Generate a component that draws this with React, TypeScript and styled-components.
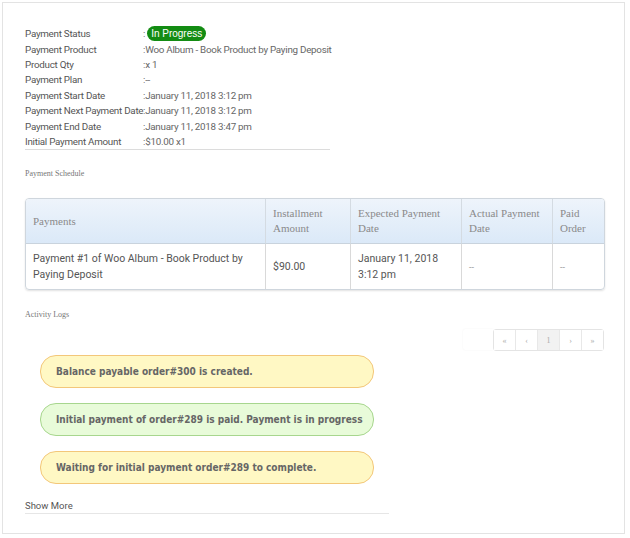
import styled, { createGlobalStyle } from "styled-components";

const GlobalStyle = createGlobalStyle`
    html, body {
        margin: 0;
        padding: 0;
        background: #fff;
    }
    body {
        font-family: Roboto, "Liberation Sans", sans-serif;
    }
`;

const Panel = styled.div`
    margin: 2px 3px 0 2px;
    width: 623px;
    height: 532px;
    box-sizing: border-box;
    border: 1px solid #e3e3e3;
    padding: 23px 20px 0 22px;
`;

const InfoList = styled.div`
    width: 305px;
    border-bottom: 1px solid #dcdcdc;
`;

const InfoRow = styled.div`
    display: flex;
    align-items: center;
    height: 15.4px;
    font-size: 9.8px;
    letter-spacing: -0.25px;
    color: #555;
    white-space: nowrap;
`;

const Label = styled.span`
    width: 118px;
    flex: none;
`;

const Value = styled.span`
    color: #666;
`;

const Badge = styled.span`
    display: inline-block;
    background: #138c13;
    color: #fff;
    font-family: "Liberation Sans", sans-serif;
    font-size: 10px;
    letter-spacing: 0;
    line-height: 15px;
    padding: 0 4px;
    border-radius: 8px;
    margin-left: 2px;
`;

const SectionTitle = styled.div<{ $top: number }>`
    font-family: "Liberation Serif", serif;
    font-size: 8px;
    color: #777;
    margin: ${(p) => p.$top}px 0 0;
`;

const Table = styled.table`
    margin-top: 20px;
    width: 580px;
    table-layout: fixed;
    border-collapse: separate;
    border-spacing: 0;
    border: 1px solid #cfd6dd;
    border-radius: 4px;
    box-shadow: 0 1px 2px rgba(0, 0, 0, 0.12);
    overflow: hidden;
`;

const Th = styled.th<{ $w?: number }>`
    width: ${(p) => (p.$w ? `${p.$w}px` : "auto")};
    box-sizing: border-box;
    text-align: left;
    vertical-align: middle;
    font-family: "Liberation Serif", serif;
    font-weight: 400;
    font-size: 11px;
    line-height: 15px;
    color: #8a8a8a;
    background: linear-gradient(#eef4fb, #dbe9f8);
    border-left: 1px solid #d4dbe2;
    border-bottom: 1px solid #c9d3dd;
    padding: 0 7px;
    height: 45px;
    &:first-child {
        border-left: none;
    }
`;

const Td = styled.td`
    font-size: 10.5px;
    line-height: 16px;
    color: #555;
    border-left: 1px solid #d9d9d9;
    padding: 0 7px;
    height: 45px;
    &:first-child {
        border-left: none;
    }
`;

const Dash = styled(Td)`
    color: #999;
    font-size: 9px;
`;

const PagerRow = styled.div`
    display: flex;
    justify-content: flex-end;
    margin-top: 10px;
`;

const Ghost = styled.div`
    width: 30px;
    height: 21px;
    border-radius: 3px 0 0 3px;
    box-shadow: 0 0 2px rgba(0, 0, 0, 0.06);
`;

const Pager = styled.div`
    display: flex;
    border: 1px solid #e4e4e4;
    border-radius: 3px;
`;

const PageBtn = styled.span<{ $active?: boolean }>`
    width: 21px;
    height: 20px;
    display: flex;
    align-items: center;
    justify-content: center;
    font-family: "Liberation Serif", serif;
    font-size: 8px;
    color: #aaa;
    background: ${(p) => (p.$active ? "#f2f2f2" : "#fff")};
    border-left: 1px solid #e8e8e8;
    &:first-child {
        border-left: none;
    }
`;

const Logs = styled.div`
    display: flex;
    flex-direction: column;
    gap: 15px;
    margin: 4px 0 0 15px;
`;

const Pill = styled.div<{ $tone: "yellow" | "green" }>`
    width: 334px;
    height: 33px;
    box-sizing: border-box;
    display: flex;
    align-items: center;
    padding-left: 15px;
    border-radius: 16px;
    border: 1px solid ${(p) => (p.$tone === "green" ? "#a7d68e" : "#f3c77a")};
    background: ${(p) => (p.$tone === "green" ? "#e8fbd9" : "#fff8c4")};
    font-family: "DejaVu Sans Condensed", "DejaVu Sans", sans-serif;
    font-weight: 700;
    font-size: 10px;
    color: #666;
    white-space: nowrap;
`;

const ShowMore = styled.div`
    width: 364px;
    margin-top: 15px;
    font-size: 9.5px;
    color: #555;
    line-height: 14px;
    border-bottom: 1px solid #e6e6e6;
`;

const info: [string, string][] = [
    ["Payment Product", "Woo Album - Book Product by Paying Deposit"],
    ["Product Qty", "x 1"],
    ["Payment Plan", "--"],
    ["Payment Start Date", "January 11, 2018 3:12 pm"],
    ["Payment Next Payment Date", "January 11, 2018 3:12 pm"],
    ["Payment End Date", "January 11, 2018 3:47 pm"],
    ["Initial Payment Amount", "$10.00 x1"],
];

const logs: { text: string; tone: "yellow" | "green" }[] = [
    { text: "Balance payable order#300 is created.", tone: "yellow" },
    { text: "Initial payment of order#289 is paid. Payment is in progress", tone: "green" },
    { text: "Waiting for initial payment order#289 to complete.", tone: "yellow" },
];

const App = () => (
    <>
        <GlobalStyle />
        <Panel>
            <InfoList>
                <InfoRow>
                    <Label>Payment Status</Label>
                    <Value>
                        :<Badge>In Progress</Badge>
                    </Value>
                </InfoRow>
                {info.map(([label, value]) => (
                    <InfoRow key={label}>
                        <Label>{label}</Label>
                        <Value>:{value}</Value>
                    </InfoRow>
                ))}
            </InfoList>

            <SectionTitle $top={19}>Payment Schedule</SectionTitle>
            <Table>
                <thead>
                    <tr>
                        <Th $w={239}>Payments</Th>
                        <Th $w={85}>Installment Amount</Th>
                        <Th $w={111}>Expected Payment Date</Th>
                        <Th $w={91}>Actual Payment Date</Th>
                        <Th>Paid Order</Th>
                    </tr>
                </thead>
                <tbody>
                    <tr>
                        <Td>Payment #1 of Woo Album - Book Product by Paying Deposit</Td>
                        <Td>$90.00</Td>
                        <Td>January 11, 2018 3:12 pm</Td>
                        <Dash>--</Dash>
                        <Dash>--</Dash>
                    </tr>
                </tbody>
            </Table>

            <SectionTitle $top={20}>Activity Logs</SectionTitle>
            <PagerRow>
                <Ghost />
                <Pager>
                    <PageBtn>«</PageBtn>
                    <PageBtn>‹</PageBtn>
                    <PageBtn $active>1</PageBtn>
                    <PageBtn>›</PageBtn>
                    <PageBtn>»</PageBtn>
                </Pager>
            </PagerRow>
            <Logs>
                {logs.map((log) => (
                    <Pill key={log.text} $tone={log.tone}>
                        {log.text}
                    </Pill>
                ))}
            </Logs>
            <ShowMore>Show More</ShowMore>
        </Panel>
    </>
);

export default App;
